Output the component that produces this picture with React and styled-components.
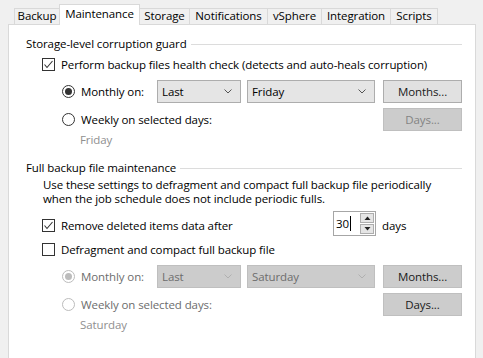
import React from 'react';
import styled, { createGlobalStyle } from 'styled-components';

const Global = createGlobalStyle`
  html, body { margin: 0; padding: 0; background: #f0f0f0; }
  body {
    font-family: "Open Sans", "Noto Sans", "Liberation Sans", sans-serif;
    font-size: 11.5px;
    letter-spacing: -0.1px;
    color: #000;
  }
  * { box-sizing: border-box; }
`;

const Window = styled.div`
  width: 483px;
  height: 358px;
  overflow: hidden;
  padding: 4px 7px 0 8px;
  display: flex;
  flex-direction: column;
`;

const TabBar = styled.div`
  display: flex;
  align-items: flex-end;
  height: 20px;
  padding-left: 7px;
  position: relative;
  z-index: 1;
`;

const Tab = styled.div`
  width: ${p => p.$w}px;
  height: ${p => (p.$active ? 21 : 16)}px;
  margin-bottom: ${p => (p.$active ? -1 : 0)}px;
  margin-left: -1px;
  display: flex;
  align-items: center;
  justify-content: center;
  border: 1px solid #d9d9d9;
  border-bottom: none;
  background: ${p => (p.$active ? '#fff' : '#f0f0f0')};
  white-space: nowrap;
  line-height: 14px;
  padding-bottom: ${p => (p.$active ? 3 : 1)}px;
`;

const Panel = styled.div`
  flex: 1;
  background: #fff;
  border: 1px solid #d9d9d9;
  border-bottom: none;
  padding: 10px 13px 0 17px;
  display: flex;
  flex-direction: column;
`;

const Heading = styled.div`
  display: flex;
  align-items: center;
  gap: 4px;
  height: 16px;
  margin-top: ${p => p.$mt || 0}px;
  white-space: nowrap;
  &::after {
    content: '';
    flex: 1;
    height: 1px;
    background: #dcdcdc;
    margin-top: 2px;
  }
`;

const Row = styled.div`
  display: flex;
  align-items: center;
  height: ${p => p.$h || 16}px;
  margin-top: ${p => p.$mt || 0}px;
  padding-left: ${p => p.$pl || 0}px;
  white-space: nowrap;
`;

const Desc = styled.div`
  margin-top: ${p => p.$mt || 0}px;
  padding-left: 17px;
  line-height: 14px;
`;

const Hint = styled.div`
  margin-top: ${p => p.$mt || 0}px;
  padding-left: 54px;
  height: 16px;
  line-height: 16px;
  color: #8f8f8f;
`;

const Label = styled.span`
  display: flex;
  align-items: center;
  gap: 6px;
  width: ${p => (p.$w ? `${p.$w}px` : 'auto')};
  flex: ${p => (p.$grow ? 1 : 'none')};
  padding-top: ${p => p.$pt || 0}px;
  color: ${p => (p.$disabled ? '#6d6d6d' : '#000')};
`;

const Box = styled.span`
  width: 13px;
  height: 13px;
  border: 1px solid #333;
  background: #fff;
  display: flex;
  align-items: center;
  justify-content: center;
  flex: none;
`;

const RadioRing = styled.span`
  width: 13px;
  height: 13px;
  border-radius: 50%;
  border: 1px solid ${p => (p.$disabled ? '#bcbcbc' : '#333')};
  background: #fff;
  display: flex;
  align-items: center;
  justify-content: center;
  flex: none;
  &::after {
    content: '';
    display: ${p => (p.$on ? 'block' : 'none')};
    width: 7px;
    height: 7px;
    border-radius: 50%;
    background: ${p => (p.$disabled ? '#bcbcbc' : '#333')};
  }
`;

const Combo = styled.div`
  width: ${p => p.$w}px;
  height: 23px;
  margin-right: ${p => p.$mr || 0}px;
  border: 1px solid ${p => (p.$disabled ? '#bfbfbf' : '#adadad')};
  background: ${p => (p.$disabled ? '#cccccc' : '#e5e5e5')};
  color: ${p => (p.$disabled ? '#6d6d6d' : '#000')};
  display: flex;
  align-items: center;
  justify-content: space-between;
  padding: 0 8px 0 4px;
  flex: none;
`;

const Button = styled.div`
  width: 79px;
  height: 23px;
  border: 1px solid ${p => (p.$disabled ? '#bfbfbf' : '#adadad')};
  background: ${p => (p.$disabled ? '#cccccc' : '#e1e1e1')};
  color: ${p => (p.$faded ? '#838383' : '#1a1a1a')};
  display: flex;
  align-items: center;
  justify-content: center;
  flex: none;
`;

const Spin = styled.div`
  width: 43px;
  height: 25px;
  margin-right: 6px;
  border: 1px solid #a6a6a6;
  display: flex;
  align-items: center;
  padding: 1px 1px 1px 2px;
  flex: none;
`;

const SpinText = styled.span`
  flex: 1;
  display: flex;
  align-items: center;
  &::after {
    content: '';
    width: 1px;
    height: 15px;
    background: #000;
    margin-left: 1px;
  }
`;

const SpinButtons = styled.div`
  width: 14px;
  height: 100%;
  display: flex;
  flex-direction: column;
  gap: 1px;
`;

const SpinBtn = styled.div`
  flex: 1;
  border: 1px solid #adadad;
  background: #e5e5e5;
  display: flex;
  align-items: center;
  justify-content: center;
`;

const Check = ({ checked }) => (
  <Box>
    {checked && (
      <svg width="11" height="11" viewBox="0 0 11 11">
        <path d="M1.5 5.5 L4 8.5 L9.5 2" fill="none" stroke="#333" strokeWidth="1.1" />
      </svg>
    )}
  </Box>
);

const Chevron = ({ disabled }) => (
  <svg width="8" height="5" viewBox="0 0 8 5">
    <path d="M0.5 0.5 L4 4 L7.5 0.5" fill="none" stroke={disabled ? '#b0b0b0' : '#555'} strokeWidth="1" />
  </svg>
);

const Tri = ({ up }) => (
  <svg width="7" height="4" viewBox="0 0 7 4">
    <path d={up ? 'M0.5 4 L3.5 0.5 L6.5 4 Z' : 'M0.5 0 L3.5 3.5 L6.5 0 Z'} fill="#222" />
  </svg>
);

const Schedule = ({ disabled, first, second, hint }) => (
  <>
    <Row $h={23} $mt={8} $pl={36}>
      <Label $w={95} $disabled={disabled}>
        <RadioRing $on $disabled={disabled} />
        Monthly on:
      </Label>
      <Combo $w={84} $mr={6} $disabled={disabled}>
        {first}
        <Chevron disabled={disabled} />
      </Combo>
      <Combo $w={128} $mr={8} $disabled={disabled}>
        {second}
        <Chevron disabled={disabled} />
      </Combo>
      <Button $disabled={disabled}>Months...</Button>
    </Row>
    <Row $h={23} $mt={5} $pl={36}>
      <Label $grow $disabled={disabled}>
        <RadioRing $disabled={disabled} />
        Weekly on selected days:
      </Label>
      <Button $disabled $faded={!disabled}>Days...</Button>
    </Row>
    <Hint $mt={1}>{hint}</Hint>
  </>
);

const tabs = [
  ['Backup', 46],
  ['Maintenance', 81],
  ['Storage', 51],
  ['Notifications', 79],
  ['vSphere', 55],
  ['Integration', 70],
  ['Scripts', 48],
];

export default function App() {
  return (
    <>
      <Global />
      <Window>
        <TabBar>
          {tabs.map(([t, w]) => (
            <Tab key={t} $w={w} $active={t === 'Maintenance'}>
              {t}
            </Tab>
          ))}
        </TabBar>
        <Panel>
          <Heading>Storage-level corruption guard</Heading>
          <Row $mt={5} $pl={16}>
            <Label>
              <Check checked />
              Perform backup files health check (detects and auto-heals corruption)
            </Label>
          </Row>
          <Schedule first="Last" second="Friday" hint="Friday" />

          <Heading $mt={11}>Full backup file maintenance</Heading>
          <Desc $mt={3}>
            Use these settings to defragment and compact full backup file periodically
            <br />
            when the job schedule does not include periodic fulls.
          </Desc>
          <Row $h={25} $mt={5} $pl={16}>
            <Label $w={291} $pt={3}>
              <Check checked />
              Remove deleted items data after
            </Label>
            <Spin>
              <SpinText>30</SpinText>
              <SpinButtons>
                <SpinBtn>
                  <Tri up />
                </SpinBtn>
                <SpinBtn>
                  <Tri />
                </SpinBtn>
              </SpinButtons>
            </Spin>
            <Label $pt={3}>days</Label>
          </Row>
          <Row $mt={5} $pl={16}>
            <Label>
              <Check />
              Defragment and compact full backup file
            </Label>
          </Row>
          <Schedule disabled first="Last" second="Saturday" hint="Saturday" />
        </Panel>
      </Window>
    </>
  );
}
